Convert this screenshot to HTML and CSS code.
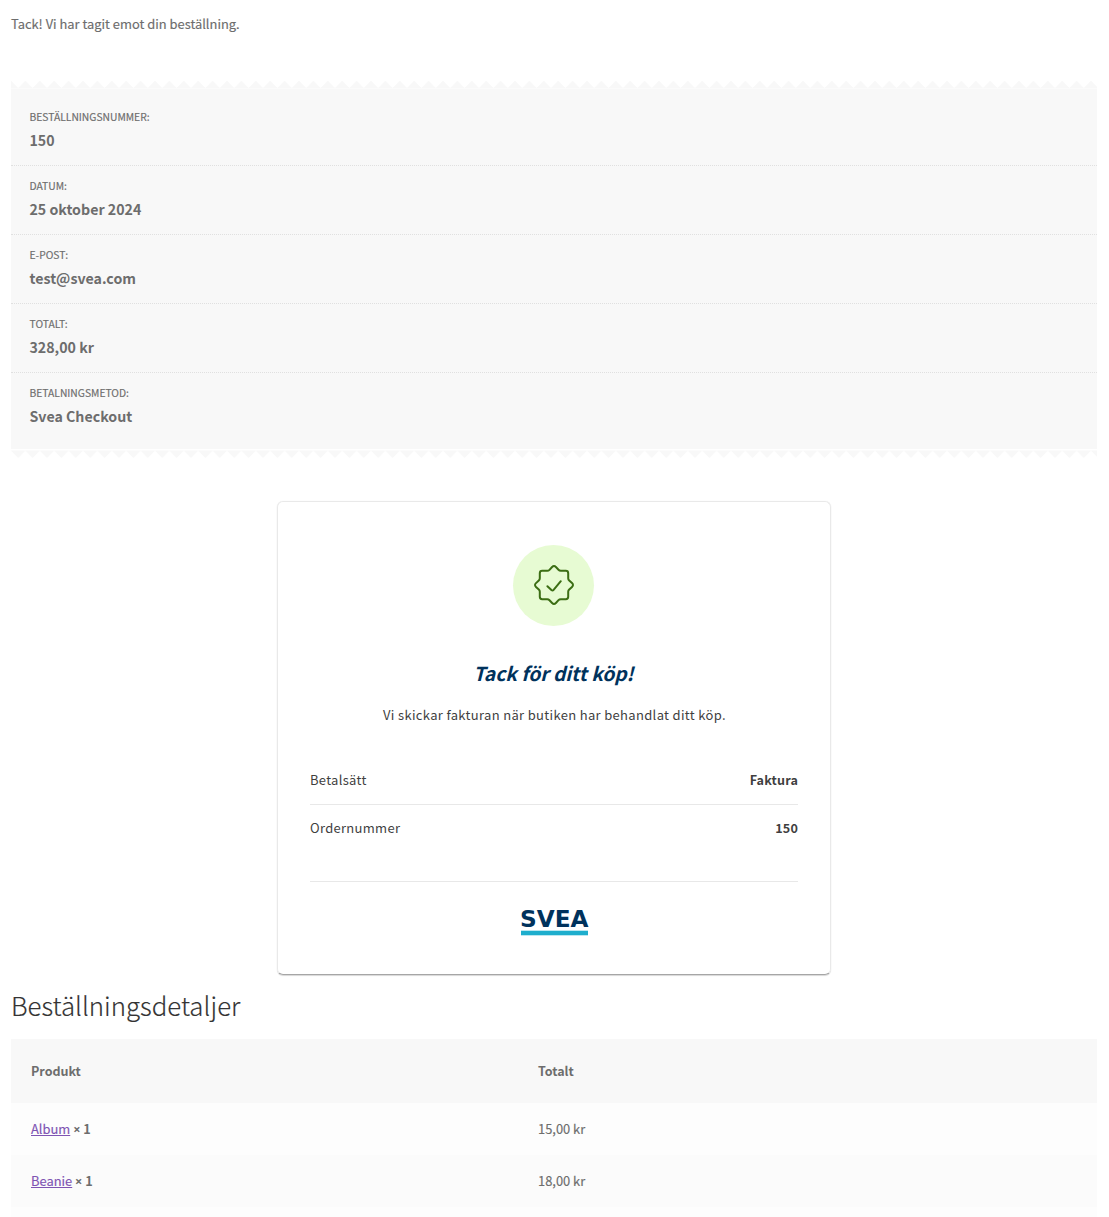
FILE: index.html
```html
<!DOCTYPE html>
<html lang="sv">
<head>
<meta charset="utf-8">
<title>Orderbekräftelse</title>
<link rel="stylesheet" href="styles.css">
</head>
<body>
<main class="page">
  <p class="notice"><span>Tack! Vi har tagit emot din beställning.</span></p>
  <svg class="teeth teeth-top" width="1086" height="8">
    <defs><pattern id="up" width="14.4" height="8" patternUnits="userSpaceOnUse"><path d="M0 -.3L7.2 6.9L14.4 -.3V7.6H0Z" fill="#f8f8f8"/></pattern></defs>
    <rect width="1086" height="8" fill="url(#up)"/>
  </svg>
  <ul class="overview">
    <li><span class="label">Beställningsnummer:</span><strong>150</strong></li>
    <li><span class="label">Datum:</span><strong>25 oktober 2024</strong></li>
    <li><span class="label">E-post:</span><strong>test@svea.com</strong></li>
    <li><span class="label">Totalt:</span><strong>328,00 kr</strong></li>
    <li><span class="label">Betalningsmetod:</span><strong>Svea Checkout</strong></li>
  </ul>
  <svg class="teeth teeth-bottom" width="1086" height="8">
    <defs><pattern id="down" width="14.4" height="8" patternUnits="userSpaceOnUse"><path d="M0 .4H14.4V.8L7.2 8L0 .8Z" fill="#f8f8f8"/></pattern></defs>
    <rect width="1086" height="8" fill="url(#down)"/>
  </svg>

  <section class="receipt">
    <div class="badge">
      <svg width="42" height="42" viewBox="0 0 42 42" fill="none" stroke="#3c6e14" stroke-width="2" stroke-linejoin="round" stroke-linecap="round">
        <path d="M19.1 3Q21 1 22.9 3L25.5 5.8Q26.4 6.8 27.8 6.8H32.8Q35.2 6.8 35.2 9.2V14.2Q35.2 15.6 36.2 16.5L39 19.1Q41 21 39 22.9L36.2 25.5Q35.2 26.4 35.2 27.8V32.8Q35.2 35.2 32.8 35.2H27.8Q26.4 35.2 25.5 36.2L22.9 39Q21 41 19.1 39L16.5 36.2Q15.6 35.2 14.2 35.2H9.2Q6.8 35.2 6.8 32.8V27.8Q6.8 26.4 5.8 25.5L3 22.9Q1 21 3 19.1L5.8 16.5Q6.8 15.6 6.8 14.2V9.2Q6.8 6.8 9.2 6.8H14.2Q15.6 6.8 16.5 5.8Z"/>
        <path d="M14.4 22.2L18.4 26Q19.6 27 20.6 25.8L27.8 17.2"/>
      </svg>
    </div>
    <h1>Tack för ditt köp!</h1>
    <p class="message">Vi skickar fakturan när butiken har behandlat ditt köp.</p>
    <dl class="facts">
      <div><dt>Betalsätt</dt><dd>Faktura</dd></div>
      <div><dt>Ordernummer</dt><dd>150</dd></div>
    </dl>
    <footer>
      <svg class="logo" width="72" height="32" viewBox="0 -6 72 32">
        <text x="2" y="17.4" textLength="68.5" lengthAdjust="spacingAndGlyphs">SVEA</text>
        <rect x="3" y="20.7" width="67" height="4.6" fill="#1eaecd"/>
      </svg>
    </footer>
  </section>

  <h2>Beställningsdetaljer</h2>
  <table class="details">
    <thead><tr><th>Produkt</th><th>Totalt</th></tr></thead>
    <tbody>
      <tr><td><a href="#">Album</a> <b><span class="times">×</span> 1</b></td><td>15,00 kr</td></tr>
      <tr><td><a href="#">Beanie</a> <b><span class="times">×</span> 1</b></td><td>18,00 kr</td></tr>
      <tr><td></td><td></td></tr>
    </tbody>
  </table>
</main>
</body>
</html>
```
FILE: styles.css
```css
* { box-sizing: border-box; }
html { overflow: hidden; }
body {
  margin: 0;
  height: 1217px;
  overflow: hidden;
  background: #fff;
  color: #6d6d6d;
  font: 12.9px/24px "Noto Sans CJK SC", sans-serif;
  -webkit-text-stroke: .15px;
}
.page { padding: 12px 12px 0 11px; }
.notice { margin: 0 0 45px; height: 24px; }

.teeth { display: block; width: 100%; height: 8px; }
.teeth-bottom { margin-top: 1px; }
.overview {
  list-style: none;
  margin: 0;
  padding: 8px 0;
  background: #f8f8f8;
}
.overview li {
  height: 69px;
  padding: 13px 18.5px 12px;
  display: flex;
  flex-direction: column;
  gap: 4px;
  border-bottom: 1px dotted #e0e0e0;
}
.overview li:last-child { height: 68px; border-bottom: 0; }
.label { font-size: 10.3px; line-height: 14px; text-transform: uppercase; }
.overview strong { font-size: 14.2px; line-height: 24px; font-weight: 700; -webkit-text-stroke: 0; }

.receipt {
  width: 554px;
  height: 474px;
  margin: 43px auto 0;
  padding: 43px 32px 0;
  border: 1px solid #e9e9e9;
  border-bottom-color: #a6a6a6;
  border-radius: 6px;
  box-shadow: 0 1px 1px rgba(0, 0, 0, .15), 0 0 1px rgba(0, 0, 0, .1);
  color: #3f3f3f;
  display: flex;
  flex-direction: column;
  align-items: center;
  -webkit-text-stroke: 0;
}
.badge {
  width: 81px;
  height: 81px;
  margin-right: 1px;
  padding-bottom: 1px;
  border-radius: 50%;
  background: #e7fbd3;
  display: grid;
  place-items: center;
}
.receipt h1 {
  margin: 31px 1px 0 0;
  font-size: 19.2px;
  line-height: 32px;
  font-style: italic;
  font-weight: 700;
  color: #00325c;
}
.message { margin: 14px 0 0 1px; font-size: 13px; line-height: 24px; letter-spacing: .33px; }
.facts { width: 100%; margin: 29px 0 0; }
.facts div {
  height: 48px;
  display: flex;
  justify-content: space-between;
  align-items: center;
}
.facts div + div { border-top: 1px solid #e8e8e8; padding-bottom: 2px; }
.facts dt { font-size: 13px; letter-spacing: .3px; }
.facts dd { margin: 0; font-size: 12.6px; font-weight: 700; letter-spacing: .15px; }
.receipt footer {
  width: 100%;
  margin-top: 29px;
  padding-top: 22px;
  border-top: 1px solid #e8e8e8;
  display: flex;
  justify-content: center;
}
.logo text { font: 700 23px "DejaVu Sans", sans-serif; fill: #00325c; }

h2 {
  margin: 10px 0 14px;
  font-size: 25.8px;
  line-height: 40px;
  font-weight: 300;
  color: #333;
}
.details { width: 100%; border-collapse: collapse; table-layout: fixed; }
.details th, .details td { height: 52px; padding: 0 20px; text-align: left; }
.details th { height: 64px; background: #f8f8f8; font-size: 12.5px; font-weight: 700; -webkit-text-stroke: 0; }
.details th:first-child { width: 507px; }
.details td { background: #fdfdfd; }
.details tr:nth-child(even) td { background: #fbfbfb; }
.details a { color: #7f54b3; text-decoration: underline; }
.details b { font-size: 12.7px; -webkit-text-stroke: 0; }
.times { font-family: "Open Sans", sans-serif; line-height: 1; }
```
